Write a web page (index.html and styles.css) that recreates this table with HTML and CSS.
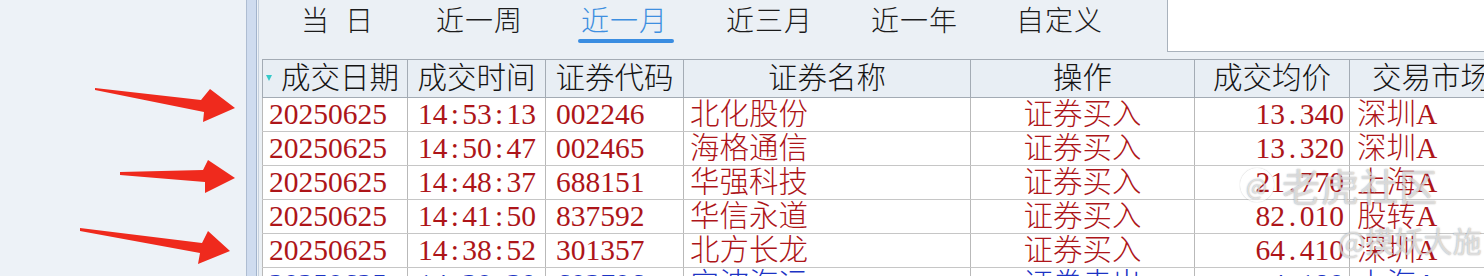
FILE: index.html
```html
<!DOCTYPE html>
<html lang="zh">
<head>
<meta charset="utf-8">
<link rel="stylesheet" href="styles.css">
</head>
<body>
<div class="app">
  <aside class="side">
    <svg class="arrows" width="246" height="276" viewBox="0 0 246 276">
      <polygon points="95,88 201,100 210,89 235,108 203,122 204,112 95,90" />
      <polygon points="120,172 203,170 208,160 235,178 205,193 205,182 120,175" />
      <polygon points="80,228 202,243 208,231 230,251 198,264 200,253 80,231" />
    </svg>
  </aside>
  <div class="splitter"></div>
  <main class="main">
    <div class="tabbar">
      <nav class="tabs">
        <div class="tab first">当<span class="sp"></span>日</div>
        <div class="tab">近一周</div>
        <div class="tab active">近一月<div class="bar"></div></div>
        <div class="tab">近三月</div>
        <div class="tab">近一年</div>
        <div class="tab">自定义</div>
      </nav>
      <div class="search"></div>
    </div>
    <div class="grid-wrap">
      <table class="grid">
        <colgroup>
          <col class="w1"><col class="w2"><col class="w3"><col class="w4"><col class="w5"><col class="w6"><col class="w7">
        </colgroup>
        <thead>
          <tr>
            <th class="h1"><span class="sort"></span>成交日期</th>
            <th>成交时间</th>
            <th>证券代码</th>
            <th>证券名称</th>
            <th>操作</th>
            <th>成交均价</th>
            <th>交易市场</th>
          </tr>
        </thead>
        <tbody>
          <tr class="buy">
            <td class="c1">20250625</td><td class="c2">14<span class="hw">:</span>53<span class="hw">:</span>13</td><td class="c3">002246</td><td class="c4">北化股份</td><td class="c5">证券买入</td><td class="c6">13<span class="hw">.</span>340</td><td class="c7">深圳A</td>
          </tr>
          <tr class="buy">
            <td class="c1">20250625</td><td class="c2">14<span class="hw">:</span>50<span class="hw">:</span>47</td><td class="c3">002465</td><td class="c4">海格通信</td><td class="c5">证券买入</td><td class="c6">13<span class="hw">.</span>320</td><td class="c7">深圳A</td>
          </tr>
          <tr class="buy">
            <td class="c1">20250625</td><td class="c2">14<span class="hw">:</span>48<span class="hw">:</span>37</td><td class="c3">688151</td><td class="c4">华强科技</td><td class="c5">证券买入</td><td class="c6">21<span class="hw">.</span>770</td><td class="c7">上海A</td>
          </tr>
          <tr class="buy">
            <td class="c1">20250625</td><td class="c2">14<span class="hw">:</span>41<span class="hw">:</span>50</td><td class="c3">837592</td><td class="c4">华信永道</td><td class="c5">证券买入</td><td class="c6">82<span class="hw">.</span>010</td><td class="c7">股转A</td>
          </tr>
          <tr class="buy">
            <td class="c1">20250625</td><td class="c2">14<span class="hw">:</span>38<span class="hw">:</span>52</td><td class="c3">301357</td><td class="c4">北方长龙</td><td class="c5">证券买入</td><td class="c6">64<span class="hw">.</span>410</td><td class="c7">深圳A</td>
          </tr>
          <tr class="sell">
            <td class="c1">20250625</td><td class="c2">14<span class="hw">:</span>30<span class="hw">:</span>30</td><td class="c3">603706</td><td class="c4">宁波海运</td><td class="c5">证券卖出</td><td class="c6">4<span class="hw">.</span>180</td><td class="c7">上海A</td>
          </tr>
        </tbody>
      </table>
      <div class="watermark">
        <div class="wm-top"><span class="wm-logo">@</span>老虎社区</div>
        <div class="wm-user">@摸妖大施</div>
      </div>
    </div>
  </main>
</div>
</body>
</html>
```

FILE: styles.css
```css
html, body {
  margin: 0;
  padding: 0;
}
body {
  width: 1484px;
  height: 276px;
  overflow: hidden;
  background: #edf2f7;
  font-family: "Noto Sans CJK SC", sans-serif;
}
.app {
  display: flex;
  height: 276px;
}
.side {
  width: 246px;
  flex: none;
  background: #edf2f7;
}
.arrows {
  display: block;
}
.arrows polygon {
  fill: #ef2a1d;
}
.splitter {
  width: 9px;
  flex: none;
  background: #cfdcef;
  border-left: 1px solid #aebdd2;
  border-right: 1px solid #a3b4cc;
}
.main {
  flex: 1;
  min-width: 0;
  border-left: 1px solid #c6d1de;
  margin-left: 1px;
  padding-left: 3px;
  background: #ebf0f5;
  overflow: hidden;
}
.tabbar {
  display: flex;
  height: 59px;
  align-items: flex-start;
}
.tabs {
  display: flex;
  gap: 58px;
  padding-left: 39px;
  padding-top: 1px;
}
.tab {
  display: flex;
  flex-direction: column;
  line-height: 36px;
  font-size: 28px;
  font-weight: 300;
  letter-spacing: 1px;
  color: #1b1b1b;
  white-space: nowrap;
}
.tab.first {
  flex-direction: row;
  margin-right: 4px;
}
.sp {
  display: inline-block;
  width: 15px;
}
.tab.active {
  color: #3e8fe0;
}
.tab .bar {
  height: 4px;
  margin: 2px -6px 0 -3px;
  border-radius: 2px;
  background: #3a8de1;
}
.search {
  margin-left: auto;
  margin-top: -1px;
  width: 350px;
  height: 53px;
  flex: none;
  background: #ffffff;
  border: 1px solid #a9b2bc;
  box-sizing: border-box;
  margin-right: -33px;
}
.grid-wrap {
  position: relative;
}
.grid {
  border-collapse: collapse;
  table-layout: fixed;
  width: 1250px;
  font-family: "Liberation Serif", "Noto Sans CJK SC", serif;
  font-size: 29.5px;
  font-weight: 300;
}
.w1 { width: 145px; }
.w2 { width: 138px; }
.w3 { width: 138px; }
.w4 { width: 287px; }
.w5 { width: 224px; }
.w6 { width: 155px; }
.w7 { width: 163px; }
.grid th {
  height: 37px;
  padding: 0;
  background: #e8eef4;
  border: 1px solid #a3abb4;
  font-weight: 300;
  color: #141414;
  text-align: center;
  white-space: nowrap;
  overflow: hidden;
  line-height: 37px;
}
.grid th.h1 {
  text-align: left;
  padding-left: 3px;
}
.sort {
  display: inline-block;
  width: 0;
  height: 0;
  border-left: 3.5px solid transparent;
  border-right: 3.5px solid transparent;
  border-top: 6px solid #35c9c9;
  margin-right: 9px;
  vertical-align: middle;
  position: relative;
  top: -3px;
}
.grid td {
  height: 33px;
  padding: 0;
  background: #ffffff;
  border-top: 1px solid #c6c6c6;
  border-bottom: 1px solid #c6c6c6;
  border-left: 1px solid #b9b9b9;
  border-right: 1px solid #b9b9b9;
  white-space: nowrap;
  overflow: hidden;
  line-height: 33px;
}
.buy td { color: #ad1519; }
.sell td { color: #1c33c4; }
.c1 { padding-left: 6px !important; }
.c2 { padding-left: 10px !important; }
.c3 { padding-left: 10px !important; }
.c4 { padding-left: 6px !important; }
.c5 { text-align: center; }
.c6 { text-align: right; padding-right: 5px !important; }
.c7 { padding-left: 7px !important; }
.hw {
  display: inline-block;
  width: 0.5em;
  text-align: center;
}
.watermark {
  position: absolute;
  left: 978px;
  top: 104px;
  color: rgba(255, 255, 255, 0.6);
  text-shadow: 0 0 1px rgba(90, 90, 90, 0.45), 0 0 2px rgba(90, 90, 90, 0.25);
  pointer-events: none;
  font-family: "Noto Sans CJK SC", sans-serif;
}
.wm-top {
  font-size: 38px;
  font-weight: 400;
  line-height: 44px;
  letter-spacing: 1px;
  display: flex;
  align-items: center;
}
.wm-logo {
  display: inline-block;
  width: 34px;
  height: 34px;
  border-radius: 50%;
  border: 3px solid rgba(255, 255, 255, 0.6);
  box-shadow: 0 0 1px rgba(90, 90, 90, 0.5);
  font-size: 22px;
  line-height: 28px;
  text-align: center;
  margin-right: 8px;
  box-sizing: border-box;
}
.wm-user {
  font-size: 29px;
  line-height: 34px;
  margin-top: 16px;
  margin-left: 98px;
  font-weight: 400;
}
```
